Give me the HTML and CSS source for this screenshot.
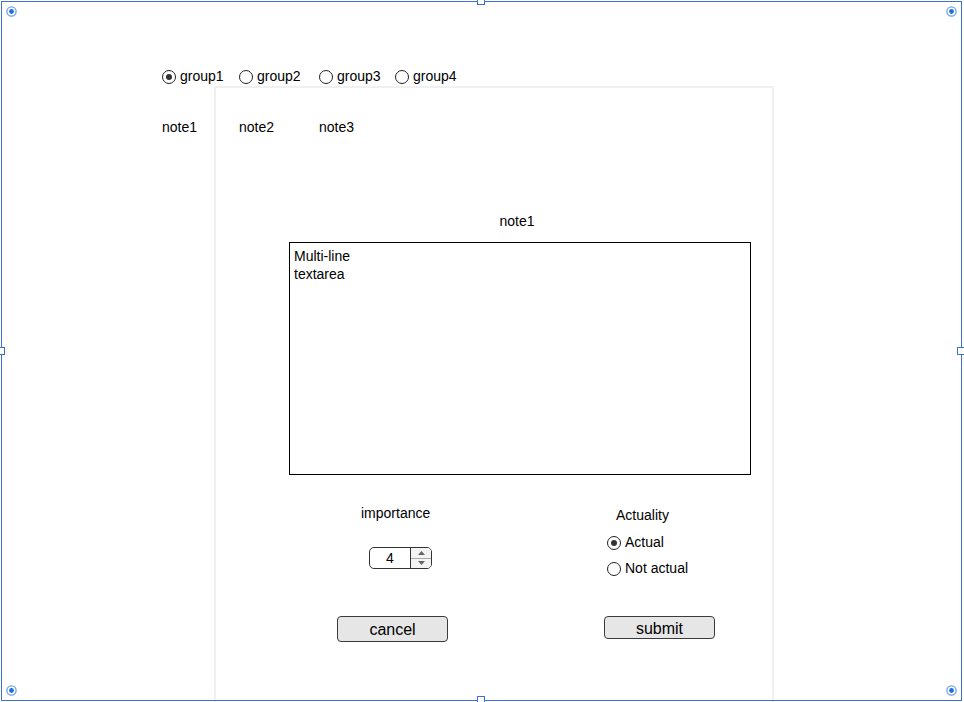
FILE: index.html
```html
<!DOCTYPE html>
<html>
<head>
<meta charset="utf-8">
<link rel="stylesheet" href="styles.css">
</head>
<body>
<div class="canvas">
  <div class="groups">
    <label class="radio"><span class="dot checked"></span>group1</label>
    <label class="radio"><span class="dot"></span>group2</label>
    <label class="radio"><span class="dot"></span>group3</label>
    <label class="radio"><span class="dot"></span>group4</label>
  </div>
  <div class="panel">
    <div class="notes"><span>note1</span><span>note2</span><span>note3</span></div>
    <div class="editor">
      <div class="editor-title">note1</div>
      <div class="textarea">Multi-line<br>textarea</div>
      <div class="controls">
        <div class="col col-left">
          <div class="importance">importance</div>
          <div class="spinner">
            <span class="spin-value">4</span>
            <span class="spin-btns">
              <span class="spin-up"><svg width="7" height="4" viewBox="0 0 7 4"><path d="M0 4 L3.5 0 L7 4 Z" fill="#666"/></svg></span>
              <span class="spin-down"><svg width="7" height="4" viewBox="0 0 7 4"><path d="M0 0 L3.5 4 L7 0 Z" fill="#666"/></svg></span>
            </span>
          </div>
          <button class="btn btn-cancel">cancel</button>
        </div>
        <div class="col col-right">
          <div class="actuality">Actuality</div>
          <label class="radio radio-row first"><span class="dot checked"></span>Actual</label>
          <label class="radio radio-row"><span class="dot"></span>Not actual</label>
          <button class="btn btn-submit">submit</button>
        </div>
      </div>
    </div>
  </div>
  <div class="selection">
    <span class="handle h-top"></span>
    <span class="handle h-bottom"></span>
    <span class="handle h-left"></span>
    <span class="handle h-right"></span>
    <svg class="target t-tl" width="11" height="11" viewBox="0 0 11 11"><circle cx="5.5" cy="5.5" r="4.6" fill="#fff" stroke="#6aa3ee" stroke-width="1.3"/><circle cx="5.5" cy="5.5" r="2.4" fill="#1f6fe0"/></svg>
    <svg class="target t-tr" width="11" height="11" viewBox="0 0 11 11"><circle cx="5.5" cy="5.5" r="4.6" fill="#fff" stroke="#6aa3ee" stroke-width="1.3"/><circle cx="5.5" cy="5.5" r="2.4" fill="#1f6fe0"/></svg>
    <svg class="target t-bl" width="11" height="11" viewBox="0 0 11 11"><circle cx="5.5" cy="5.5" r="4.6" fill="#fff" stroke="#6aa3ee" stroke-width="1.3"/><circle cx="5.5" cy="5.5" r="2.4" fill="#1f6fe0"/></svg>
    <svg class="target t-br" width="11" height="11" viewBox="0 0 11 11"><circle cx="5.5" cy="5.5" r="4.6" fill="#fff" stroke="#6aa3ee" stroke-width="1.3"/><circle cx="5.5" cy="5.5" r="2.4" fill="#1f6fe0"/></svg>
  </div>
</div>
</body>
</html>
```
FILE: styles.css
```css
html, body {
  margin: 0;
  height: 702px;
  overflow: hidden;
  background: #fff;
}
body {
  font-family: "Liberation Sans", Arial, sans-serif;
  font-size: 14px;
  color: #000;
}
.canvas {
  position: relative;
  width: 964px;
  height: 702px;
  overflow: hidden;
  box-sizing: border-box;
  padding: 68px 0 0 162px;
}
.groups {
  display: grid;
  grid-template-columns: 77px 80px 76px auto;
  height: 17px;
  line-height: 17px;
}
.radio {
  display: flex;
  align-items: center;
  gap: 4px;
  white-space: nowrap;
  line-height: 17px;
}
.dot {
  width: 14px;
  height: 14px;
  box-sizing: border-box;
  border: 1px solid #222;
  border-radius: 50%;
  background: #fff;
  display: inline-flex;
  align-items: center;
  justify-content: center;
  flex: none;
}
.dot.checked::after {
  content: "";
  width: 6px;
  height: 6px;
  border-radius: 50%;
  background: #333;
}
.panel {
  margin: 1px 0 0 52px;
  width: 560px;
  height: 640px;
  box-sizing: border-box;
  border: 2px solid #f0f0f0;
  padding-top: 31px;
}
.notes {
  display: grid;
  grid-template-columns: 77px 80px auto;
  margin-left: -54px;
  line-height: 16px;
}
.editor {
  margin: 78px 0 0 73px;
  width: 462px;
}
.editor-title {
  text-align: center;
  line-height: 16px;
  padding-right: 6px;
}
.textarea {
  margin-top: 13px;
  height: 233px;
  box-sizing: border-box;
  border: 1px solid #000;
  padding: 4px 4px;
  line-height: 18px;
}
.controls {
  display: flex;
}
.col {
  display: flex;
  flex-direction: column;
  align-items: flex-start;
}
.col-left {
  margin-left: 48px;
  width: 111px;
}
.importance {
  margin-top: 30px;
  padding-left: 24px;
  line-height: 16px;
}
.spinner {
  margin: 26px 0 0 32px;
  width: 63px;
  height: 22px;
  box-sizing: border-box;
  border: 1px solid #333;
  border-radius: 5px;
  display: flex;
  overflow: hidden;
  background: #fff;
}
.spin-value {
  flex: 0 0 40px;
  text-align: center;
  line-height: 21px;
}
.spin-btns {
  flex: 1;
  display: flex;
  flex-direction: column;
  border-left: 1px solid #333;
  background: #f4f4f4;
}
.spin-up, .spin-down {
  flex: 1;
  display: flex;
  align-items: center;
  justify-content: center;
}
.spin-up {
  border-bottom: 1px solid #aaa;
}
.btn {
  width: 111px;
  box-sizing: border-box;
  border: 1px solid #3a3a3a;
  border-radius: 4px;
  background: #e6e6e6;
  font-family: "Liberation Sans", Arial, sans-serif;
  font-size: 16px;
  color: #000;
  padding: 2px 0 0;
}
.btn-cancel {
  margin-top: 47px;
  height: 26px;
}
.col-right {
  margin-left: 156px;
}
.actuality {
  margin-top: 32px;
  padding-left: 12px;
  line-height: 16px;
}
.radio-row {
  margin-top: 9px;
  margin-left: 3px;
}
.radio-row.first {
  margin-top: 11px;
}
.btn-submit {
  margin-top: 39px;
  height: 23px;
}
.selection {
  position: absolute;
  left: 1px;
  top: 1px;
  width: 961px;
  height: 700px;
  box-sizing: border-box;
  border: 1px solid #3f6fd8;
  pointer-events: none;
}
.handle {
  position: absolute;
  width: 8px;
  height: 8px;
  box-sizing: border-box;
  border: 1px solid #3f6fd8;
  background: #fff;
}
.h-top { left: 475px; top: -5px; }
.h-bottom { left: 475px; top: 694px; }
.h-left { left: -5px; top: 345px; }
.h-right { left: 955px; top: 345px; }
.target {
  position: absolute;
  display: block;
}
.t-tl { left: 4px; top: 4px; }
.t-tr { left: 944px; top: 4px; }
.t-bl { left: 4px; top: 683px; }
.t-br { left: 944px; top: 683px; }
```
